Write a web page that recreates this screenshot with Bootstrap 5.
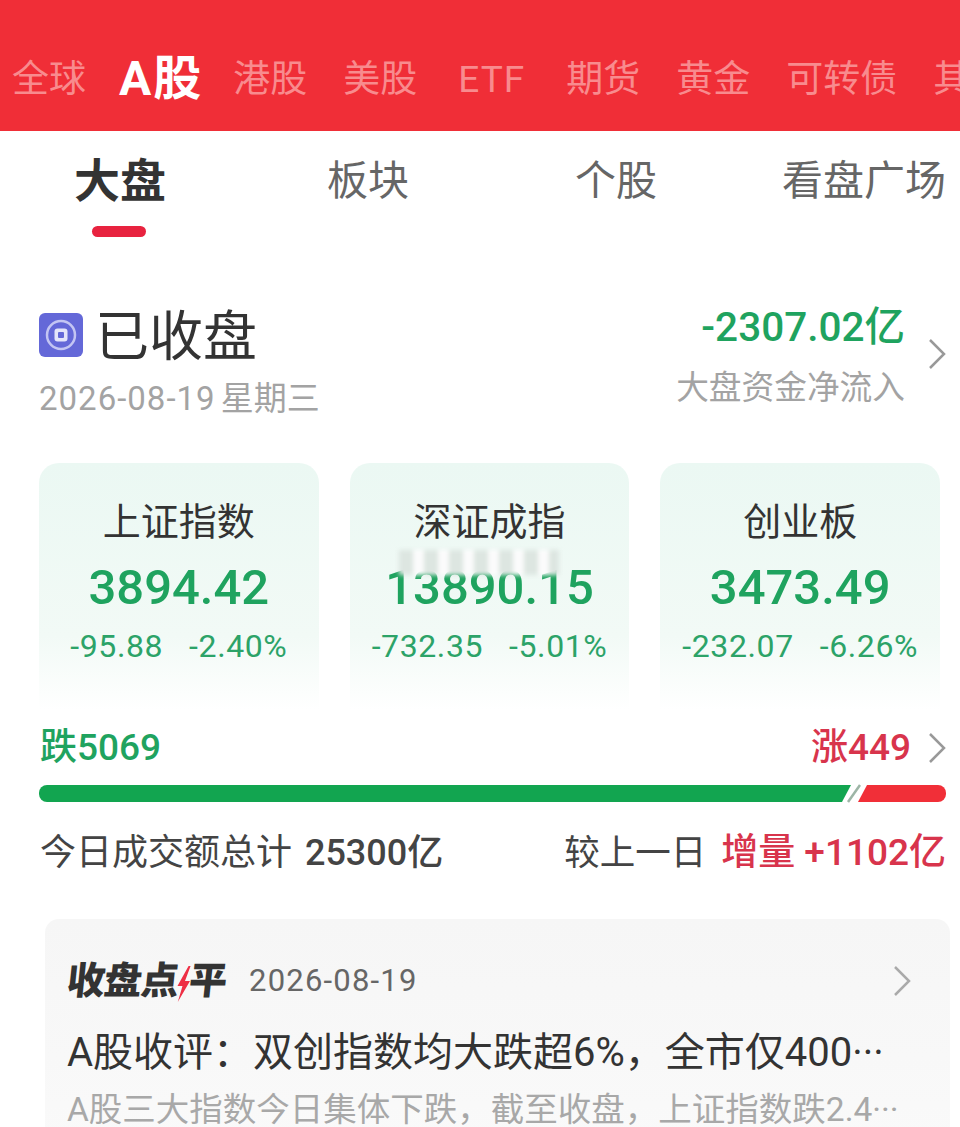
<!DOCTYPE html>
<html lang="zh-CN">
<head>
    <meta charset="UTF-8">
    <meta name="viewport" content="width=device-width, initial-scale=1.0">
    <title>大盘</title>
    <link href="https://cdn.jsdelivr.net/npm/bootstrap@5.3.0/dist/css/bootstrap.min.css" rel="stylesheet">
    <style>
        html, body { height: 1127px; overflow: hidden; }
        body { font-family: Roboto, "Noto Sans CJK SC", sans-serif; color: #333; background: #fff; }
        .mkt-bar { height: 131px; background: #f02e37; padding: 54px 0 0 12px; gap: 36px; white-space: nowrap; overflow: hidden; }
        .mkt-tab { font-size: 37px; line-height: 52px; color: #f88b8e; }
        .mkt-tab.on { font-size: 48px; font-weight: 700; color: #fff; margin: -1px -6px 0 -3px; letter-spacing: 2px; }
        .mkt-tab.latin { margin: 0 5px; letter-spacing: 1px; }
        .sub-bar { height: 110px; margin-left: -4px; display: grid; grid-template-columns: repeat(4, 248px); text-align: center; white-space: nowrap; }
        .sub-tab { font-size: 41px; line-height: 56px; color: #666; margin-top: 22px; }
        .sub-tab.on { font-size: 46px; font-weight: 700; color: #333; position: relative; }
        .sub-tab.on::after { content: ""; position: absolute; left: 96px; top: 73px; width: 54px; height: 11px; border-radius: 6px; background: #e8233f; }
        .status { padding: 65px 14px 0 39px; height: 222px; }
        .dot-icon { width: 44px; height: 44px; margin-top: 7px; }
        .status-title { font-size: 54px; line-height: 64px; margin-left: 12px; color: #333; }
        .status-date { font-size: 33px; line-height: 44px; color: #a3a3a3; margin-top: 7px; letter-spacing: 1px; }
        .status-week { letter-spacing: 0; margin-left: -4px; }
        .status-right { margin-top: -4px; gap: 23px; }
        .flow-num { font-size: 40.5px; line-height: 50px; font-weight: 500; color: #1fa35f; }
        .flow-label { font-size: 32.7px; line-height: 46px; color: #a3a3a3; margin-top: 13px; }
        .flow-arrow { margin-bottom: 6px; }
        .idx-row { padding: 0 20px 0 39px; gap: 31px; height: 247px; }
        .idx-box { flex: 1 1 0; border-radius: 20px 20px 0 0; background: linear-gradient(#ebf8f3, #f2faf6 70%, #fff); text-align: center; padding-top: 35px; position: relative; }
        .idx-name { font-size: 38px; line-height: 48px; color: #333; }
        .idx-num { font-size: 49px; line-height: 66px; font-weight: 500; color: #1fa35f; margin-top: 9px; }
        .idx-sub { font-size: 32px; line-height: 40px; color: #2ca368; margin-top: 5px; gap: 26px; letter-spacing: .6px; }
        .smear { position: absolute; left: 49px; top: 87px; width: 160px; height: 25px; background: repeating-linear-gradient(90deg, #dde6e1 0 14px, #fbfbfb 14px 25px); filter: blur(2px); }
        .rise-row { padding: 14px 14px 0 40px; height: 75px; }
        .rise-right { gap: 17px; }
        .fall-txt { font-size: 37px; line-height: 48px; font-weight: 500; color: #1fa35f; }
        .rise-txt { font-size: 37px; line-height: 48px; font-weight: 500; color: #d8344c; }
        .split-bar { margin: 0 14px 0 39px; height: 17px; }
        .split-fall { flex: 0 0 812px; background: #12a550; border-radius: 8px 0 0 8px; clip-path: polygon(0 0, 100% 0, calc(100% - 9px) 100%, 0 100%); }
        .split-mark { flex: 0 0 7px; overflow: visible; }
        .split-rise { flex: 1 1 0; background: #f12f38; border-radius: 0 8px 8px 0; clip-path: polygon(9px 0, 100% 0, 100% 100%, 0 100%); }
        .turn-row { padding: 0 14px 0 40px; margin-top: 26px; line-height: 50px; font-size: 36px; color: #444; }
        .turn-side { font-size: 35.5px; }
        .turn-val { font-weight: 500; font-size: 36px; margin-left: 4px; }
        .turn-red { font-weight: 500; font-size: 37px; color: #d8344c; margin-left: 15px; }
        .note-box { margin: 41px 10px 0 45px; padding: 37px 38px 0 22px; height: 232px; border-radius: 14px 14px 0 0; background: linear-gradient(#f6f6f6, #f8f8f8 60%, #fafafa); }
        .note-head { display: inline-block; font-size: 38px; line-height: 50px; font-weight: 900; color: #333; letter-spacing: -1px; transform: skewX(-6deg); white-space: nowrap; }
        .note-bolt { margin: 0 -2px 0 -1px; }
        .note-date { font-size: 31px; color: #666; margin-left: 23px; letter-spacing: 1.2px; }
        .note-title { font-size: 40px; line-height: 52px; color: #333; margin-top: 21px; white-space: nowrap; }
        .note-desc { font-size: 33.5px; line-height: 34px; color: #a8a8a8; margin-top: 14px; white-space: nowrap; }
    </style>
</head>
<body>

<!-- Market tabs -->
<div class="mkt-bar d-flex">
    <span class="mkt-tab">全球</span>
    <span class="mkt-tab on">A股</span>
    <span class="mkt-tab">港股</span>
    <span class="mkt-tab">美股</span>
    <span class="mkt-tab latin">ETF</span>
    <span class="mkt-tab">期货</span>
    <span class="mkt-tab">黄金</span>
    <span class="mkt-tab">可转债</span>
    <span class="mkt-tab">其他</span>
</div>

<!-- Sub tabs -->
<div class="sub-bar">
    <span class="sub-tab on">大盘</span>
    <span class="sub-tab">板块</span>
    <span class="sub-tab">个股</span>
    <span class="sub-tab">看盘广场</span>
</div>

<!-- Market status -->
<div class="status d-flex justify-content-between align-items-start">
    <div>
        <div class="d-flex align-items-start">
            <svg class="dot-icon" viewBox="0 0 44 44">
                <rect width="44" height="44" rx="6" fill="#6468d8"/>
                <circle cx="22" cy="22" r="14" fill="none" stroke="#c3c5f3" stroke-width="2.5"/>
                <rect x="15.5" y="15.5" width="13" height="13" rx="3" fill="#e4e5fa"/>
                <rect x="19" y="19" width="6" height="6" rx="1" fill="#6468d8"/>
            </svg>
            <span class="status-title">已收盘</span>
        </div>
        <div class="status-date">2026-08-19 <span class="status-week">星期三</span></div>
    </div>
    <div class="status-right d-flex align-items-center">
        <div class="text-end">
            <div class="flow-num">-2307.02亿</div>
            <div class="flow-label">大盘资金净流入</div>
        </div>
        <svg class="flow-arrow" width="18" height="32" viewBox="0 0 18 32"><path d="M2 2l14 14L2 30" fill="none" stroke="#999" stroke-width="2.5"/></svg>
    </div>
</div>

<!-- Index cards -->
<div class="idx-row d-flex">
    <div class="idx-box">
        <div class="idx-name">上证指数</div>
        <div class="idx-num">3894.42</div>
        <div class="idx-sub d-flex justify-content-center"><span>-95.88</span><span>-2.40%</span></div>
    </div>
    <div class="idx-box">
        <div class="idx-name">深证成指</div>
        <div class="idx-num">13890.15</div>
        <div class="idx-sub d-flex justify-content-center"><span>-732.35</span><span>-5.01%</span></div>
        <div class="smear"></div>
    </div>
    <div class="idx-box">
        <div class="idx-name">创业板</div>
        <div class="idx-num">3473.49</div>
        <div class="idx-sub d-flex justify-content-center"><span>-232.07</span><span>-6.26%</span></div>
    </div>
</div>

<!-- Rise and fall -->
<div class="rise-row d-flex justify-content-between align-items-start">
    <span class="fall-txt">跌5069</span>
    <div class="rise-right d-flex align-items-center">
        <span class="rise-txt">涨449</span>
        <svg width="18" height="32" viewBox="0 0 18 32"><path d="M2 2l14 14L2 30" fill="none" stroke="#999" stroke-width="2.5"/></svg>
    </div>
</div>
<div class="split-bar d-flex">
    <div class="split-fall"></div>
    <svg class="split-mark" width="7" height="17" viewBox="0 0 7 17"><path d="M9 0L-3 17" stroke="#9db5a6" stroke-width="2.5"/></svg>
    <div class="split-rise"></div>
</div>

<!-- Turnover -->
<div class="turn-row d-flex justify-content-between">
    <div>今日成交额总计 <span class="turn-val">25300亿</span></div>
    <div class="turn-side">较上一日<span class="turn-red">增量 +1102亿</span></div>
</div>

<!-- Closing note -->
<div class="note-box">
    <div class="d-flex justify-content-between align-items-center">
        <div class="d-flex align-items-center">
            <span class="note-head">收盘点<svg class="note-bolt" width="14" height="36" viewBox="0 0 14 36"><path d="M10 0L1 20h5L3 36l10-21H8l4-15z" fill="#ee2f45"/></svg>平</span>
            <span class="note-date">2026-08-19</span>
        </div>
        <svg width="20" height="32" viewBox="0 0 18 32"><path d="M2 2l14 14L2 30" fill="none" stroke="#aaa" stroke-width="2.5"/></svg>
    </div>
    <div class="note-title">A股收评：双创指数均大跌超6%，全市仅400···</div>
    <div class="note-desc">A股三大指数今日集体下跌，截至收盘，上证指数跌2.4···</div>
</div>

<script src="https://cdn.jsdelivr.net/npm/bootstrap@5.3.0/dist/js/bootstrap.bundle.min.js"></script>
</body>
</html>
